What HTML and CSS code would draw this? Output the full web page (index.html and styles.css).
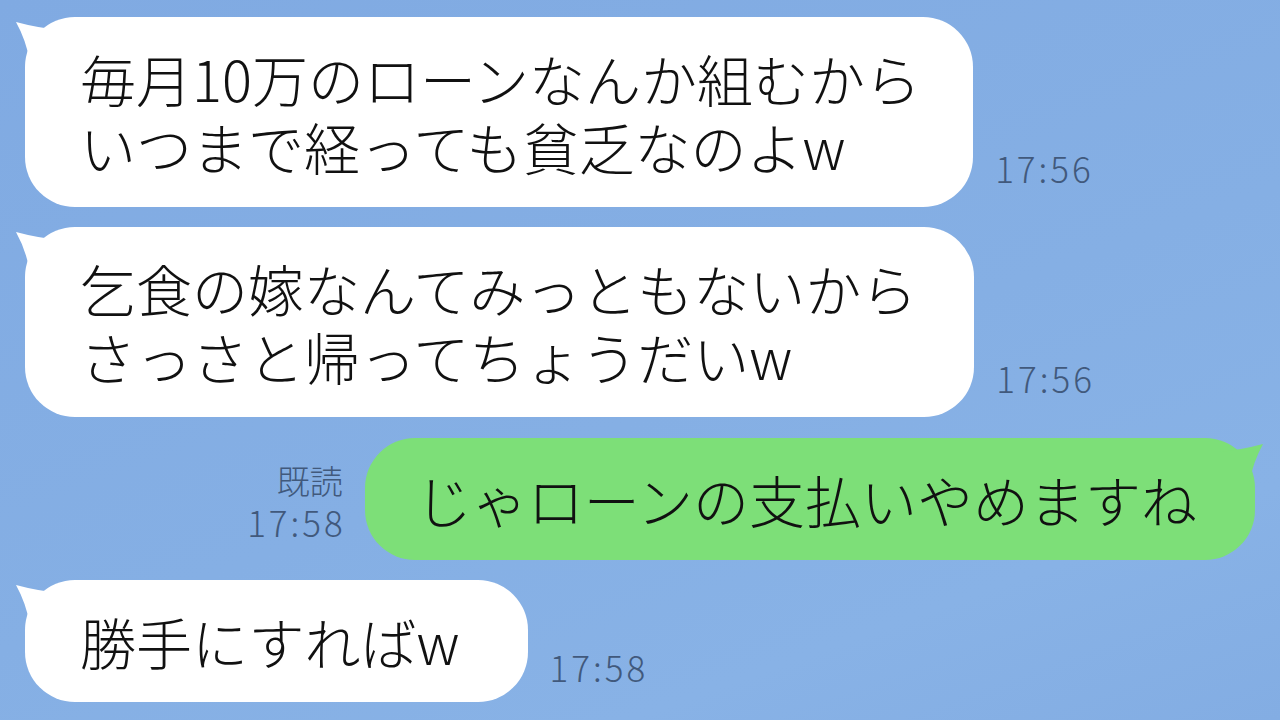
FILE: index.html
```html
<!DOCTYPE html>
<html lang="ja">
<head>
    <meta charset="UTF-8">
    <meta name="viewport" content="width=device-width, initial-scale=1.0">
    <title>トーク</title>
    <link rel="stylesheet" href="styles.css">
</head>
<body>

<div class="chat">
    <div class="row row-in">
        <div class="bubble bubble-in">毎月10万のローンなんか組むから<br>いつまで経っても貧乏なのよw</div>
        <span class="time">17:56</span>
    </div>
    <div class="row row-in">
        <div class="bubble bubble-in bubble-wide">乞食の嫁なんてみっともないから<br>さっさと帰ってちょうだいw</div>
        <span class="time">17:56</span>
    </div>
    <div class="row row-out">
        <div class="meta">
            <span>既読</span>
            <span class="time">17:58</span>
        </div>
        <div class="bubble bubble-out">じゃローンの支払いやめますね</div>
    </div>
    <div class="row row-in">
        <div class="bubble bubble-in bubble-short">勝手にすればw</div>
        <span class="time time-last">17:58</span>
    </div>
</div>

</body>
</html>
```

FILE: styles.css
```css
body {
    margin: 0;
    height: 720px;
    overflow: hidden;
    background: linear-gradient(160deg, #80aae2 0%, #85afe4 55%, #88b2e6 80%, #83ade3 100%);
    font-family: "Noto Sans CJK JP", "Noto Sans", sans-serif;
    font-weight: 300;
    color: #111;
}
.chat {
    display: flex;
    flex-direction: column;
    gap: 20px;
    padding: 17px 25px 0;
}
.row {
    display: flex;
    align-items: flex-end;
    gap: 22px;
}
.row-out {
    justify-content: flex-end;
    margin-top: 1px;
}
.bubble {
    position: relative;
    font-size: 56px;
    line-height: 68px;
    padding: 27px 52px 27px 55px;
    border-radius: 50px;
    white-space: nowrap;
}
/* little curved horn at the top corner */
.bubble::before {
    content: '';
    position: absolute;
    top: 5px;
    left: -9px;
    width: 45px;
    height: 40px;
    background: inherit;
    clip-path: path('M0 0 Q22 6 45 8 L45 40 L14 40 Q10 18 0 0 Z');
}
.bubble-in {
    background-color: #fff;
}
.bubble-wide {
    padding-right: 57px;
}
.bubble-short {
    padding-right: 68px;
}
.bubble-out {
    background-color: #7ddf78;
    padding: 27px 58px 27px 51px;
}
.bubble-out::before {
    left: auto;
    right: -8px;
    top: 6px;
    transform: scaleX(-1);
}
.time {
    font-size: 35px;
    line-height: 1;
    letter-spacing: 3px;
    color: #41597c;
    margin-bottom: 22px;
}
.time-last {
    margin-bottom: 18px;
}
.meta {
    display: flex;
    flex-direction: column;
    align-items: flex-end;
    font-size: 33px;
    line-height: 41px;
    color: #41597c;
    margin-bottom: 18px;
}
.meta .time {
    margin-bottom: 0;
    line-height: 41px;
    margin-right: -3px;
}
```
